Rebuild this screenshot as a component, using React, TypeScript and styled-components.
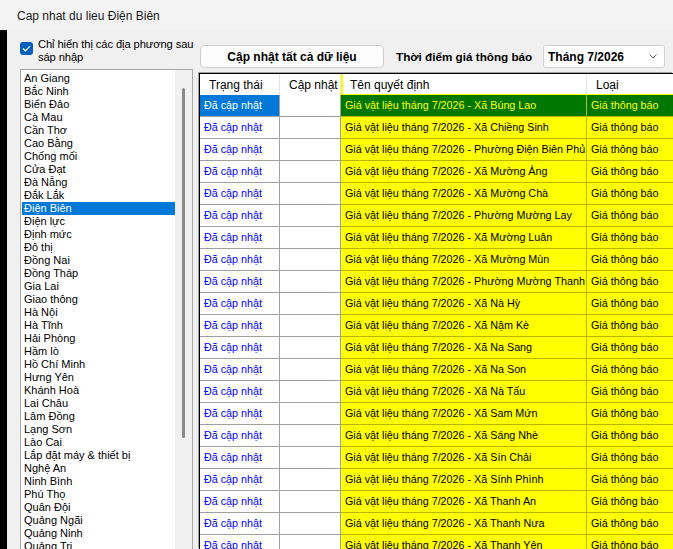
import React from 'react';
import styled, { createGlobalStyle } from 'styled-components';

const provinces = [
  'An Giang', 'Bắc Ninh', 'Biển Đảo', 'Cà Mau', 'Cần Thơ', 'Cao Bằng', 'Chống mối', 'Cửa Đạt',
  'Đà Nẵng', 'Đắk Lắk', 'Điện Biên', 'Điện lực', 'Định mức', 'Đô thị', 'Đồng Nai', 'Đồng Tháp',
  'Gia Lai', 'Giao thông', 'Hà Nội', 'Hà Tĩnh', 'Hải Phòng', 'Hầm lò', 'Hồ Chí Minh', 'Hưng Yên',
  'Khánh Hoà', 'Lai Châu', 'Lâm Đồng', 'Lạng Sơn', 'Lào Cai', 'Lắp đặt máy & thiết bị', 'Nghệ An',
  'Ninh Bình', 'Phú Thọ', 'Quân Đội', 'Quảng Ngãi', 'Quảng Ninh', 'Quảng Trị', 'Sơn La', 'Tây Ninh',
];

const communes = [
  'Xã Búng Lao', 'Xã Chiềng Sinh', 'Phường Điện Biên Phủ', 'Xã Mường Ảng', 'Xã Mường Chà',
  'Phường Mường Lay', 'Xã Mường Luân', 'Xã Mường Mùn', 'Phường Mường Thanh', 'Xã Nà Hỳ',
  'Xã Nậm Kè', 'Xã Na Sang', 'Xã Na Son', 'Xã Nà Tấu', 'Xã Sam Mứn', 'Xã Sáng Nhè', 'Xã Sín Chải',
  'Xã Sính Phình', 'Xã Thanh An', 'Xã Thanh Nưa', 'Xã Thanh Yên',
];

const GlobalStyle = createGlobalStyle`
  html, body {
    margin: 0;
    padding: 0;
    background: #f0f0f0;
    overflow: hidden;
  }
  * {
    box-sizing: border-box;
  }
`;

const Window = styled.div`
  width: 673px;
  height: 549px;
  display: flex;
  flex-direction: column;
  font-family: 'Liberation Sans', Arial, sans-serif;
  overflow: hidden;
  background: #f0f0f0;
`;

const TitleBar = styled.div`
  height: 30px;
  flex: none;
  display: flex;
  align-items: center;
  padding: 2px 0 0 17px;
  font-size: 12px;
  color: #1a1a1a;
  background: #f3f3f3;
`;

const Body = styled.div`
  flex: 1;
  display: flex;
  min-height: 0;
`;

const Edge = styled.div`
  width: 7px;
  flex: none;
  background: #000;
`;

const LeftPanel = styled.div`
  width: 186px;
  flex: none;
  display: flex;
  flex-direction: column;
  padding: 12px 0 0 13px;
`;

const CheckRow = styled.label`
  display: flex;
  align-items: flex-start;
  gap: 5px;
  height: 27px;
`;

const CheckBox = styled.span`
  width: 13px;
  height: 13px;
  flex: none;
  border-radius: 3px;
  background: #005fb8;
  display: flex;
  align-items: center;
  justify-content: center;
`;

const CheckText = styled.span`
  margin-top: -4px;
  font-size: 11.2px;
  letter-spacing: -0.1px;
  line-height: 13px;
  white-space: nowrap;
  color: #000;
`;

const ListBox = styled.div`
  flex: 1;
  display: flex;
  border: 1px solid #a8a8a8;
  border-bottom: none;
  background: #fff;
  min-height: 0;
  overflow: hidden;
`;

const Items = styled.div`
  flex: 1;
  padding: 2px 0 0 1px;
  overflow: hidden;
`;

const Item = styled.div<{ $selected?: boolean }>`
  height: 13px;
  line-height: 13px;
  font-size: 11px;
  padding-left: 2px;
  white-space: nowrap;
  color: ${(p) => (p.$selected ? '#fff' : '#000')};
  background: ${(p) => (p.$selected ? '#0078d7' : 'transparent')};
`;

const ScrollTrack = styled.div`
  width: 17px;
  flex: none;
  background: #f0f0f0;
  display: flex;
  justify-content: center;
  padding-top: 18px;
`;

const Thumb = styled.div`
  width: 3px;
  height: 350px;
  border-radius: 2px;
  background: #8a8a8a;
`;

const RightPanel = styled.div`
  flex: 1;
  display: flex;
  flex-direction: column;
  min-width: 0;
  padding: 15px 0 0 6px;
`;

const Toolbar = styled.div`
  height: 23px;
  display: flex;
  align-items: center;
  margin-left: 1px;
  margin-bottom: 5px;
`;

const Button = styled.button`
  width: 184px;
  height: 23px;
  flex: none;
  border: 1px solid #d0d0d0;
  border-radius: 4px;
  background: #fdfdfd;
  font-family: 'Liberation Sans', Arial, sans-serif;
  font-size: 12px;
  font-weight: bold;
  color: #000;
  padding: 0;
`;

const FieldLabel = styled.span`
  width: 147px;
  flex: none;
  margin-left: 12px;
  font-size: 11.7px;
  font-weight: bold;
  color: #000;
  white-space: nowrap;
`;

const Combo = styled.div`
  width: 122px;
  height: 23px;
  flex: none;
  border: 1px solid #d0d0d0;
  border-radius: 3px;
  background: #fff;
  display: flex;
  align-items: center;
  justify-content: space-between;
  padding: 0 7px 0 4px;
  font-size: 12px;
  font-weight: bold;
  color: #000;
`;

const GridFrame = styled.div`
  flex: 1;
  border-top: 1px solid #000;
  border-left: 1px solid #000;
  box-shadow: -1px -1px 0 #a0a0a0;
  background: #fff;
  overflow: hidden;
  min-height: 0;
`;

const COLS = '80px 61px 246px 120px';

const HeaderRow = styled.div`
  display: grid;
  grid-template-columns: ${COLS};
  height: 21px;
`;

const HeadCell = styled.div<{ $mark?: 'left' | 'bottom' }>`
  font-size: 12px;
  line-height: 22px;
  padding-left: 9px;
  color: #000;
  border-right: 1px solid #e3e3e3;
  white-space: nowrap;
  ${(p) => (p.$mark === 'left' ? 'box-shadow: inset 2px -2px 0 #ffff00;' : '')}
  ${(p) => (p.$mark === 'bottom' ? 'box-shadow: inset 0 -2px 0 #ffff00;' : '')}
`;

const Row = styled.div`
  display: grid;
  grid-template-columns: ${COLS};
  height: 22px;
`;

type Tone = 'plain' | 'selected' | 'yellow' | 'green';

const toneBg: Record<Tone, string> = {
  plain: '#fff',
  selected: '#0078d7',
  yellow: '#ffff00',
  green: '#007800',
};

const toneText: Record<Tone, string> = {
  plain: '#0000ff',
  selected: '#fff',
  yellow: '#000',
  green: '#ffff00',
};

const Cell = styled.div<{ $tone: Tone }>`
  font-size: 10.75px;
  line-height: 21px;
  padding-left: 4px;
  white-space: nowrap;
  overflow: hidden;
  background: ${(p) => toneBg[p.$tone]};
  color: ${(p) => toneText[p.$tone]};
  border-right: 1px solid ${(p) => (p.$tone === 'yellow' || p.$tone === 'green' ? '#b8b800' : '#a0a0a0')};
  border-bottom: 1px solid ${(p) => (p.$tone === 'yellow' || p.$tone === 'green' ? '#b8b800' : '#a0a0a0')};
`;

const App: React.FC = () => {
  return (
    <Window>
      <GlobalStyle />
      <TitleBar>Cap nhat du lieu Điện Biên</TitleBar>
      <Body>
        <Edge />
        <LeftPanel>
          <CheckRow>
            <CheckBox>
              <svg width="9" height="7" viewBox="0 0 9 7">
                <path d="M1 3.5 L3.4 5.8 L8 1.2" fill="none" stroke="#fff" strokeWidth="1.2" />
              </svg>
            </CheckBox>
            <CheckText>
              Chỉ hiển thị các địa phương sau
              <br />
              sáp nhập
            </CheckText>
          </CheckRow>
          <ListBox>
            <Items>
              {provinces.map((name) => (
                <Item key={name} $selected={name === 'Điện Biên'}>
                  {name}
                </Item>
              ))}
            </Items>
            <ScrollTrack>
              <Thumb />
            </ScrollTrack>
          </ListBox>
        </LeftPanel>
        <RightPanel>
          <Toolbar>
            <Button>Cập nhật tất cả dữ liệu</Button>
            <FieldLabel>Thời điểm giá thông báo</FieldLabel>
            <Combo>
              <span>Tháng 7/2026</span>
              <svg width="8" height="5" viewBox="0 0 8 5">
                <path d="M0.5 0.5 L4 4 L7.5 0.5" fill="none" stroke="#606060" strokeWidth="1" />
              </svg>
            </Combo>
          </Toolbar>
          <GridFrame>
            <HeaderRow>
              <HeadCell>Trạng thái</HeadCell>
              <HeadCell>Cập nhật</HeadCell>
              <HeadCell $mark="left">Tên quyết định</HeadCell>
              <HeadCell $mark="bottom">Loại</HeadCell>
            </HeaderRow>
            {communes.map((c, i) => (
              <Row key={c}>
                <Cell $tone={i === 0 ? 'selected' : 'plain'}>Đã cập nhật</Cell>
                <Cell $tone="plain" />
                <Cell $tone={i === 0 ? 'green' : 'yellow'}>Giá vật liệu tháng 7/2026 - {c}</Cell>
                <Cell $tone={i === 0 ? 'green' : 'yellow'}>Giá thông báo</Cell>
              </Row>
            ))}
          </GridFrame>
        </RightPanel>
      </Body>
    </Window>
  );
};

export default App;
